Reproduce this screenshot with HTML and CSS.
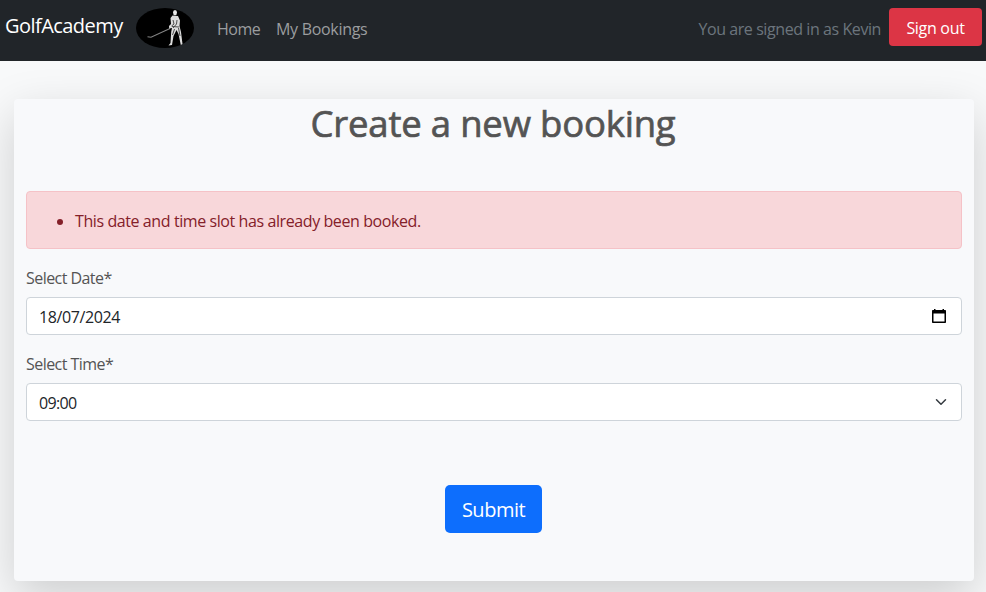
FILE: index.html
```
<!DOCTYPE html>
<html lang="en">
<head>
<meta charset="utf-8">
<title>GolfAcademy</title>
<link rel="stylesheet" href="styles.css">
</head>
<body>
<nav class="navbar">
  <a class="brand"><span class="brand-name">GolfAcademy</span>
    <svg class="logo" width="58" height="40" viewBox="0 0 58 40">
      <ellipse cx="29" cy="20" rx="29" ry="20" fill="#000"/>
      <path d="M34 20.500L15 29.200L11.500 28.800" fill="none" stroke="#858585" stroke-width="1.1"/>
      <ellipse cx="39" cy="4.600" rx="2" ry="2.700" fill="#e8e8e8"/>
      <path d="M36.500 7.500L42 8L44 12.500L43.500 18L45 24L46.500 36L44.800 37L42.500 26L40.500 22L37.500 28L36 37L32.500 37.500L34.500 35L35.200 24L36 20L33.200 20.500L33 18L35 16L34.500 10Z" fill="#dcdcdc"/>
      <path d="M37 12L38 16L35.500 18M41 12L40.500 16L37 20M38.500 21L36.500 27M42.500 20L44 28M36 18.500L43 19" fill="none" stroke="#3c3c3c" stroke-width=".9"/>
    </svg>
  </a>
  <a class="nav-link home">Home</a>
  <a class="nav-link bookings">My Bookings</a>
  <span class="signed-in">You are signed in as Kevin</span>
  <button class="sign-out"><span>Sign out</span></button>
</nav>
<main class="card">
  <h1><span>Create a new booking</span></h1>
  <ul class="alert"><li><span>This date and time slot has already been booked.</span></li></ul>
  <form class="form">
    <label class="label-date"><span>Select Date*</span></label>
    <div class="field"><span class="date-value">18/07/2024</span>
      <svg class="calendar" width="14" height="15" viewBox="0 0 14 15"><path d="M2 0h1.500v1h7V0H12v1h1.200q.8 0 .8.8V13.200q0 .8-.8.8H.8q-.8 0-.8-.8V1.800Q0 1 .8 1H2ZM1.500 4.500v8h11v-8Z" fill="#000" fill-rule="evenodd"/></svg>
    </div>
    <label class="label-time"><span>Select Time*</span></label>
    <div class="field"><span class="time-value">09:00</span>
      <svg class="chevron" width="16" height="12" viewBox="0 0 16 16"><path d="M2 5l6 6 6-6" fill="none" stroke="#343a40" stroke-width="2" stroke-linecap="round" stroke-linejoin="round"/></svg>
    </div>
    <button class="submit" type="button"><span>Submit</span></button>
  </form>
</main>
</body>
</html>
```
FILE: styles.css
```
* { box-sizing: border-box; }
body {
  margin: 0;
  height: 592px;
  overflow: hidden;
  background: #f8f9fa;
  color: #545454;
  font: 16px/24px "Open Sans", "Noto Sans", sans-serif;
}
span, .nav-link { white-space: nowrap; }
.navbar {
  display: flex;
  align-items: flex-start;
  height: 61px;
  padding: 8px 4px 0 5px;
  background: #212529;
}
.brand { display: flex; width: 212px; color: #fff; font-size: 20px; line-height: 36px; }
.brand-name { width: 131px; letter-spacing: -.55px; }
.logo { flex: none; }
.nav-link { color: #9b9d9f; line-height: 42px; letter-spacing: -.3px; }
.home { width: 59px; letter-spacing: -.5px; }
.signed-in { margin-left: auto; margin-right: 8px; color: #6c757d; line-height: 42px; letter-spacing: -.42px; }
button { border: 0; color: #fff; font-family: inherit; padding: 0; }
.sign-out { width: 93px; height: 38px; border-radius: 4px; background: #dc3545; font-size: 16px; line-height: 40px; letter-spacing: -.3px; }
.card {
  width: 960px;
  height: 482px;
  margin: 38px 0 0 14px;
  padding: 0 12px;
  border-radius: 4px;
  background: #f8f9fb;
  box-shadow: 0 16px 48px rgba(0, 0, 0, .175);
}
h1 {
  margin: 0;
  height: 92px;
  padding-right: 2px;
  text-align: center;
  font-size: 36.5px;
  font-weight: 500;
  line-height: 48px;
  letter-spacing: -.2px;
  -webkit-text-stroke: .7px #545454;
}
.alert {
  margin: 0;
  height: 58px;
  padding: 16px 16px 16px 48px;
  border: 1px solid #f5c2c7;
  border-radius: 4px;
  background: #f8d7da;
  color: #842029;
  line-height: 26px;
  letter-spacing: -.41px;
}
.form { display: flex; flex-direction: column; padding-top: 16px; }
label { height: 32px; line-height: 26px; letter-spacing: -.55px; }
.field {
  display: flex;
  align-items: center;
  justify-content: space-between;
  height: 38px;
  margin-bottom: 16px;
  padding: 0 12px;
  border: 1px solid #ced4da;
  border-radius: 4px;
  background: #fff;
  color: #212529;
  letter-spacing: -.4px;
}
.field span { padding-top: 2px; }
.time-value { letter-spacing: -.65px; }
.calendar { margin-right: 3px; }
.submit {
  align-self: center;
  width: 97px;
  height: 48px;
  margin: 48px 1px 0 0;
  border-radius: 5px;
  background: #0d6efd;
  font-size: 20px;
  line-height: 49px;
  letter-spacing: -.5px;
}
```
